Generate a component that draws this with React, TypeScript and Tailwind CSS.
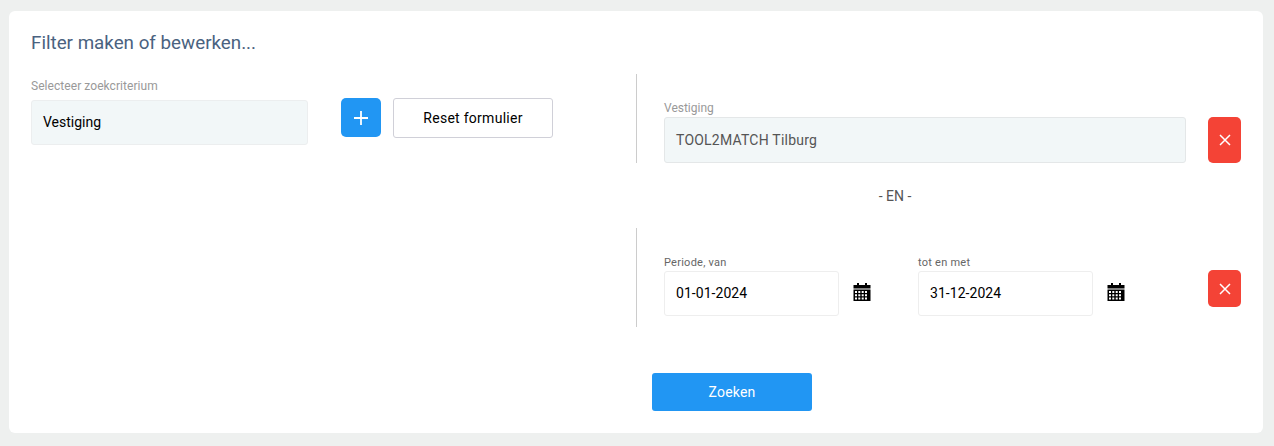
const CalendarIcon = () => (
  <svg width="18" height="18" viewBox="0 0 18 18" className="shrink-0" fill="#000">
    <path d="M4 0h2v2h6V0h2v2h3.500v3.500H.5V2H4z" />
    <path
      fillRule="evenodd"
      d="M.5 6.500h17V18H.5zM2 8v2h2V8zm3.300 0v2h2V8zm3.400 0v2h2V8zM12 8v2h2V8zM2 11.200v2h2v-2zm3.300 0v2h2v-2zm3.400 0v2h2v-2zm3.300 0v2h2v-2zM2 14.500v2h2v-2zm3.300 0v2h2v-2zm3.400 0v2h2v-2zm3.300 0v2h2v-2z"
    />
  </svg>
);

const RemoveButton = ({ className }: { className: string }) => (
  <button className={`flex w-[33px] shrink-0 items-center justify-center rounded-[5px] bg-[#f44336] ${className}`}>
    <svg width="12" height="12" viewBox="0 0 12 12" stroke="#fff" strokeWidth="1.500" fill="none">
      <path d="M1 1l10 10M11 1L1 11" />
    </svg>
  </button>
);

const DateField = ({ label, value, className }: { label: string; value: string; className: string }) => (
  <div className={className}>
    <div className="-mt-px h-[16px] text-[11px] leading-[15px] tracking-[0.25px] text-[#666]">{label}</div>
    <div className="flex items-center">
      <div className="flex h-[45px] w-[175px] items-center rounded-[3px] border border-[#eeeeee] pl-[11px] text-[14px] tracking-[0.05px] text-black">
        {value}
      </div>
      <div className="mb-[4px] ml-[14px]">
        <CalendarIcon />
      </div>
    </div>
  </div>
);

export default function App() {
  return (
    <div className="h-[446px] w-[1274px] bg-[#eef0ef] pl-[9px] pr-[11px] pt-[11px] pb-[13px] font-['Roboto',sans-serif]">
      <div className="relative h-full rounded-[6px] bg-white pl-[22px] pr-[22px] pt-[20px]">
        <h2 className="text-[18.800px] leading-[24px] font-normal text-[#4a6280]">Filter maken of bewerken...</h2>

        <div className="mt-[19px] flex">
          {/* left: criterium kiezen */}
          <div className="flex w-[605px] shrink-0 items-start">
            <div className="mt-[5px] w-[277px]">
              <div className="h-[21px] text-[12px] leading-[15px] tracking-[0.06px] text-[#999]">Selecteer zoekcriterium</div>
              <div className="flex h-[45px] items-center rounded-[3px] border border-[#eceeef] bg-[#f2f7f8] pl-[11px] text-[14px] text-black">
                Vestiging
              </div>
            </div>
            <button className="ml-[33px] mt-[24px] flex h-[39px] w-[40px] items-center justify-center rounded-[5px] bg-[#2196f3]">
              <svg width="16" height="16" viewBox="0 0 16 16" stroke="#fff" strokeWidth="1.800" fill="none">
                <path d="M8 1v14M1 8h14" />
              </svg>
            </button>
            <button className="ml-[12px] mt-[24px] h-[40px] w-[160px] rounded-[3px] border border-[#d0d0d8] bg-white text-[14px] tracking-[0.27px] text-black">
              Reset formulier
            </button>
          </div>

          {/* right: gekozen criteria */}
          <div className="w-[605px]">
            <div className="flex h-[89px] border-l border-[#cccccc] pl-[27px] pt-[27px]">
              <div className="w-[522px]">
                <div className="h-[16px] text-[12px] leading-[15px] text-[#999]">Vestiging</div>
                <div className="flex h-[46px] items-center rounded-[3px] border border-[#e4e7e8] bg-[#f2f7f8] pl-[11px] text-[14px] tracking-[0.22px] text-[#555]">
                  TOOL2MATCH Tilburg
                </div>
              </div>
              <RemoveButton className="ml-[22px] mt-[16px] h-[46px]" />
            </div>

            <div className="flex h-[65px] w-[518px] items-center justify-center pt-[2px] text-[14px] text-[#555]">- EN -</div>

            <div className="flex h-[99px] border-l border-[#cccccc] pl-[27px] pt-[28px]">
              <DateField label="Periode, van" value="01-01-2024" className="w-[254px]" />
              <DateField label="tot en met" value="31-12-2024" className="w-[268px]" />
              <RemoveButton className="ml-[22px] mt-[14px] h-[37px]" />
            </div>
          </div>
        </div>

        <div className="mt-[46px] flex pl-[621px]">
          <button className="h-[38px] w-[160px] rounded-[3px] bg-[#2196f3] text-[14px] tracking-[0.2px] text-white">Zoeken</button>
        </div>
      </div>
    </div>
  );
}
